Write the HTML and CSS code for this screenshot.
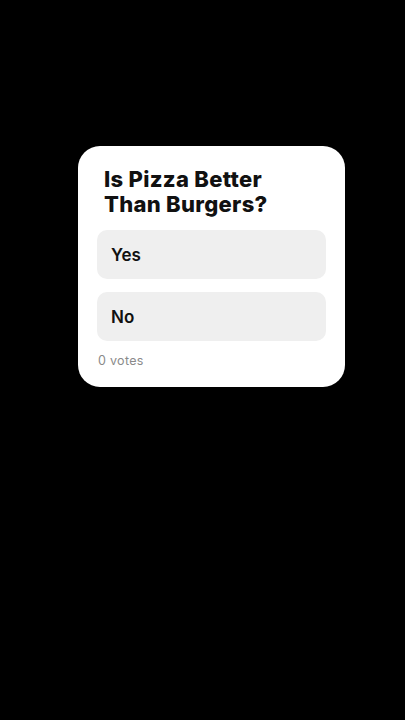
FILE: index.html
```html
<!DOCTYPE html>
<html>
<head>
<meta charset="utf-8">
<link rel="stylesheet" href="styles.css">
</head>
<body>
<div class="card">
  <h1 class="title">Is Pizza Better<br>Than Burgers?</h1>
  <div class="options">
    <div class="option">Yes</div>
    <div class="option">No</div>
  </div>
  <div class="votes">0 votes</div>
</div>
</body>
</html>
```
FILE: styles.css
```css
html, body {
  margin: 0;
  padding: 0;
  background: #000;
  height: 100%;
}
body {
  font-family: Inter, "Noto Sans", sans-serif;
  padding-top: 146px;
  padding-left: 78px;
  box-sizing: border-box;
}
.card {
  width: 267px;
  background: #fff;
  border-radius: 22px;
  padding: 21px 19px 19px 19px;
  box-sizing: border-box;
}
.title {
  margin: 0 0 13px 0;
  padding-left: 7px;
  font-size: 22px;
  line-height: 25px;
  font-weight: 800;
  letter-spacing: 0.3px;
  color: #111;
}
.options {
  display: flex;
  flex-direction: column;
  gap: 13px;
}
.option {
  height: 49px;
  line-height: 50px;
  background: #efefef;
  border-radius: 10px;
  padding-left: 14px;
  font-size: 17px;
  font-weight: 600;
  color: #111;
}
.votes {
  margin-top: 12px;
  font-size: 12.5px;
  line-height: 15px;
  letter-spacing: 0.3px;
  color: #8a8a8a;
  padding-left: 1px;
}
```
